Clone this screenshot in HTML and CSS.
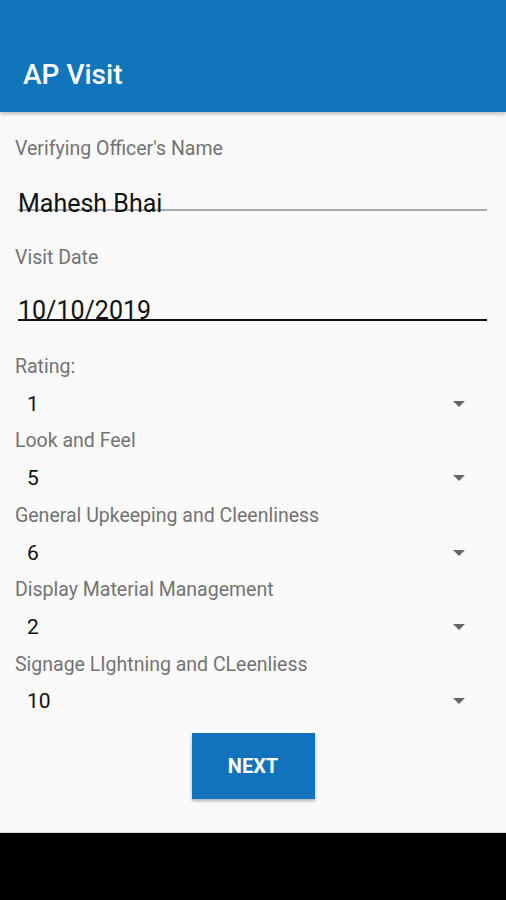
FILE: index.html
```html
<!DOCTYPE html>
<html lang="en">
  <head>
    <meta charset="UTF-8" />
    <meta name="viewport" content="width=device-width, initial-scale=1.0" />
    <title>AP Visit</title>
    <link rel="stylesheet" href="styles.css">
  </head>
  <body>
    <div class="screen">
      <header class="app-bar">
        <h1>AP Visit</h1>
      </header>

      <main class="form">
        <div class="text-field">
          <label class="field-label">Verifying Officer's Name</label>
          <div class="input-line">Mahesh Bhai</div>
        </div>

        <div class="text-field date-field">
          <label class="field-label">Visit Date</label>
          <div class="input-line dark">10/10/2019</div>
        </div>

        <div class="spinners">
          <div class="spinner-label">Rating:</div>
          <div class="spinner"><span>1</span><i class="arrow"></i></div>

          <div class="spinner-label">Look and Feel</div>
          <div class="spinner"><span>5</span><i class="arrow"></i></div>

          <div class="spinner-label">General Upkeeping and Cleenliness</div>
          <div class="spinner"><span>6</span><i class="arrow"></i></div>

          <div class="spinner-label">Display Material Management</div>
          <div class="spinner"><span>2</span><i class="arrow"></i></div>

          <div class="spinner-label">Signage LIghtning and CLeenliess</div>
          <div class="spinner"><span>10</span><i class="arrow"></i></div>
        </div>

        <div class="actions">
          <button class="next-btn">NEXT</button>
        </div>
      </main>

      <div class="nav-bar"></div>
    </div>
  </body>
</html>
```

FILE: styles.css
```css
body {
  margin: 0;
  font-family: Roboto, "Liberation Sans", sans-serif;
  background-color: #000000;
}

.screen {
  display: flex;
  flex-direction: column;
  height: 900px;
  width: 506px;
}

.app-bar {
  height: 112px;
  background-color: #1075bb;
  display: flex;
  align-items: flex-end;
  position: relative;
  z-index: 1;
  box-shadow: 0 2px 4px rgba(0, 0, 0, 0.25);
}

.app-bar h1 {
  margin: 0 0 22px 23px;
  font-size: 28px;
  font-weight: 500;
  color: #ffffff;
  line-height: 30px;
}

.form {
  flex: 1;
  background-color: #fafafa;
  padding: 24px 0 0 0;
  border-bottom: 1px solid #d8d8d8;
}

.field-label,
.spinner-label {
  display: block;
  margin-left: 15px;
  font-size: 19.5px;
  line-height: 24px;
  color: #737373;
}

.field-label {
  padding-top: 1px;
}

.input-line {
  margin: 0 19px 0 18px;
  padding-top: 30px;
  height: 18px;
  line-height: 26px;
  font-size: 25px;
  color: #111111;
  border-bottom: 2px solid #a8a8a8;
}

.input-line.dark {
  border-bottom-color: #111111;
  height: 21px;
  padding-top: 28px;
}

.date-field {
  margin-top: 34px;
}

.spinners {
  margin-top: 27px;
}

.spinner-label {
  line-height: 37.2px;
}

.spinner {
  display: flex;
  align-items: center;
  justify-content: space-between;
  height: 37.2px;
  padding: 0 41px 0 27px;
  font-size: 21px;
  color: #111111;
}

.arrow {
  width: 0;
  height: 0;
  border-left: 6px solid transparent;
  border-right: 6px solid transparent;
  border-top: 6px solid #666666;
}

.actions {
  display: flex;
  justify-content: center;
  margin-top: 13px;
}

.next-btn {
  width: 123px;
  height: 66px;
  border: none;
  background-color: #1272bc;
  color: #ffffff;
  font-family: Roboto, "Liberation Sans", sans-serif;
  font-size: 20px;
  font-weight: 700;
  box-shadow: 0 2px 3px rgba(0, 0, 0, 0.3);
}

.nav-bar {
  height: 67px;
  background-color: #000000;
}
```
